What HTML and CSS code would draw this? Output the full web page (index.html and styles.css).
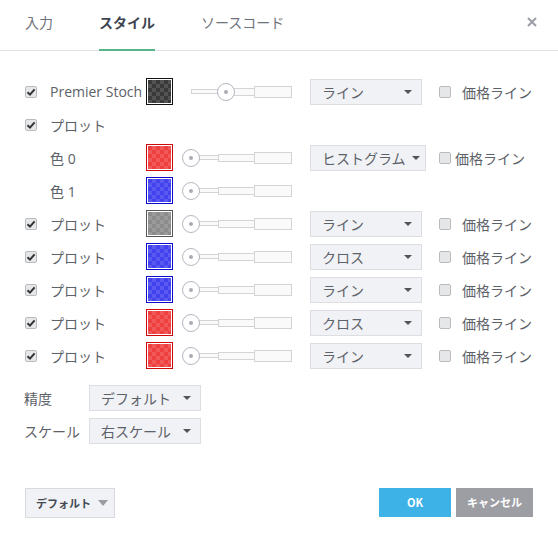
FILE: index.html
```html
<!DOCTYPE html>
<html lang="ja">
<head>
<meta charset="utf-8">
<link rel="stylesheet" href="styles.css">
</head>
<body>
<div class="dialog">
  <div class="tabs">
    <div class="tab">入力</div>
    <div class="tab active">スタイル</div>
    <div class="tab">ソースコード</div>
    <div class="close"><svg width="10" height="10" viewBox="0 0 10 10"><path d="M1 1L9 9M9 1L1 9" stroke="#9a9da3" stroke-width="2"/></svg></div>
  </div>

  <div class="content">
    <div class="row">
      <span class="cb checked"><svg width="10" height="10" viewBox="0 0 10 10"><path d="M1.5 5.2L4 7.6L8.6 2.4" fill="none" stroke="#333" stroke-width="2"/></svg></span>
      <span class="label">Premier Stoch</span>
      <span class="swatch black"></span>
      <div class="slider"><span class="seg s1"></span><span class="seg s2"></span><span class="seg s3"></span><span class="thumb mid"></span></div>
      <div class="select"><span>ライン</span><i class="caret"></i></div>
      <span class="cb pcb"></span><span class="plabel">価格ライン</span>
    </div>

    <div class="row">
      <span class="cb checked"><svg width="10" height="10" viewBox="0 0 10 10"><path d="M1.5 5.2L4 7.6L8.6 2.4" fill="none" stroke="#333" stroke-width="2"/></svg></span>
      <span class="label">プロット</span>
    </div>

    <div class="row">
      <span class="cb empty"></span>
      <span class="label">色 0</span>
      <span class="swatch red"></span>
      <div class="slider"><span class="seg s1"></span><span class="seg s2"></span><span class="seg s3"></span><span class="thumb"></span></div>
      <div class="select wide"><span>ヒストグラム</span><i class="caret"></i></div>
      <span class="cb pcb tight"></span><span class="plabel tight">価格ライン</span>
    </div>

    <div class="row">
      <span class="cb empty"></span>
      <span class="label">色 1</span>
      <span class="swatch blue"></span>
      <div class="slider"><span class="seg s1"></span><span class="seg s2"></span><span class="seg s3"></span><span class="thumb"></span></div>
    </div>

    <div class="row">
      <span class="cb checked"><svg width="10" height="10" viewBox="0 0 10 10"><path d="M1.5 5.2L4 7.6L8.6 2.4" fill="none" stroke="#333" stroke-width="2"/></svg></span>
      <span class="label">プロット</span>
      <span class="swatch gray"></span>
      <div class="slider"><span class="seg s1"></span><span class="seg s2"></span><span class="seg s3"></span><span class="thumb"></span></div>
      <div class="select"><span>ライン</span><i class="caret"></i></div>
      <span class="cb pcb"></span><span class="plabel">価格ライン</span>
    </div>

    <div class="row">
      <span class="cb checked"><svg width="10" height="10" viewBox="0 0 10 10"><path d="M1.5 5.2L4 7.6L8.6 2.4" fill="none" stroke="#333" stroke-width="2"/></svg></span>
      <span class="label">プロット</span>
      <span class="swatch blue"></span>
      <div class="slider"><span class="seg s1"></span><span class="seg s2"></span><span class="seg s3"></span><span class="thumb"></span></div>
      <div class="select"><span>クロス</span><i class="caret"></i></div>
      <span class="cb pcb"></span><span class="plabel">価格ライン</span>
    </div>

    <div class="row">
      <span class="cb checked"><svg width="10" height="10" viewBox="0 0 10 10"><path d="M1.5 5.2L4 7.6L8.6 2.4" fill="none" stroke="#333" stroke-width="2"/></svg></span>
      <span class="label">プロット</span>
      <span class="swatch blue"></span>
      <div class="slider"><span class="seg s1"></span><span class="seg s2"></span><span class="seg s3"></span><span class="thumb"></span></div>
      <div class="select"><span>ライン</span><i class="caret"></i></div>
      <span class="cb pcb"></span><span class="plabel">価格ライン</span>
    </div>

    <div class="row">
      <span class="cb checked"><svg width="10" height="10" viewBox="0 0 10 10"><path d="M1.5 5.2L4 7.6L8.6 2.4" fill="none" stroke="#333" stroke-width="2"/></svg></span>
      <span class="label">プロット</span>
      <span class="swatch red"></span>
      <div class="slider"><span class="seg s1"></span><span class="seg s2"></span><span class="seg s3"></span><span class="thumb"></span></div>
      <div class="select"><span>クロス</span><i class="caret"></i></div>
      <span class="cb pcb"></span><span class="plabel">価格ライン</span>
    </div>

    <div class="row">
      <span class="cb checked"><svg width="10" height="10" viewBox="0 0 10 10"><path d="M1.5 5.2L4 7.6L8.6 2.4" fill="none" stroke="#333" stroke-width="2"/></svg></span>
      <span class="label">プロット</span>
      <span class="swatch red"></span>
      <div class="slider"><span class="seg s1"></span><span class="seg s2"></span><span class="seg s3"></span><span class="thumb"></span></div>
      <div class="select"><span>ライン</span><i class="caret"></i></div>
      <span class="cb pcb"></span><span class="plabel">価格ライン</span>
    </div>

    <div class="opts">
      <div class="orow">
        <span class="olabel">精度</span>
        <div class="select"><span>デフォルト</span><i class="caret"></i></div>
      </div>
      <div class="orow">
        <span class="olabel">スケール</span>
        <div class="select"><span>右スケール</span><i class="caret"></i></div>
      </div>
    </div>
  </div>

  <div class="footer">
    <div class="defbtn">デフォルト<i class="caret light"></i></div>
    <div class="btns">
      <div class="btn ok">OK</div>
      <div class="btn cancel">キャンセル</div>
    </div>
  </div>
</div>
</body>
</html>
```

FILE: styles.css
```css
html, body {
  margin: 0;
  padding: 0;
  background: #ffffff;
}
body {
  font-family: "Open Sans", "Noto Sans CJK JP", sans-serif;
  color: #5d6168;
  font-size: 14px;
}
.dialog {
  width: 558px;
  height: 542px;
  position: relative;
}
.tabs {
  height: 50px;
  border-bottom: 1px solid #e0e3e6;
  display: flex;
  align-items: stretch;
  padding-left: 25px;
  gap: 46px;
  position: relative;
}
.tab {
  font-family: "Noto Sans CJK JP", sans-serif;
  font-size: 14px;
  color: #6e727a;
  display: flex;
  align-items: center;
  padding-bottom: 5px;
  box-sizing: border-box;
  border-bottom: 2px solid transparent;
  margin-bottom: -1px;
}
.tab.active {
  color: #3f4550;
  font-weight: 700;
  border-bottom-color: #57b388;
}
.close {
  position: absolute;
  right: 21px;
  top: 17px;
  width: 10px;
  height: 10px;
  line-height: 0;
}
.content {
  padding-top: 24px;
}
.row {
  display: flex;
  align-items: center;
  height: 33px;
  padding-left: 25px;
}
.cb {
  width: 12px;
  height: 12px;
  box-sizing: border-box;
  border: 1px solid #b9bbbe;
  border-radius: 2px;
  background: #e6e7e8;
  display: inline-flex;
  align-items: center;
  justify-content: center;
  flex: none;
}
.cb svg { display: block; }
.cb.empty {
  border: none;
  background: none;
}
.label {
  margin-left: 13px;
  width: 96px;
  flex: none;
  white-space: nowrap;
  color: #5d6168;
}
.swatch {
  width: 27px;
  height: 27px;
  box-sizing: border-box;
  border: 1px solid #111;
  padding: 1px;
  background-clip: content-box;
  flex: none;
  box-shadow: inset 0 0 0 1px #fff;
  background-image: conic-gradient(rgba(255,255,255,0.13) 25%, transparent 0 50%, rgba(255,255,255,0.13) 0 75%, transparent 0);
  background-size: 8px 8px;
  background-origin: content-box;
}
.swatch.black { border-color: #111; background-color: #3a3a3a; }
.swatch.red { border-color: #cc0a0a; background-color: #ef4040; }
.swatch.blue { border-color: #0a0acc; background-color: #4242ef; }
.swatch.gray { border-color: #555; background-color: #8b8b8b; }
.slider {
  position: relative;
  margin-left: 9px;
  width: 110px;
  height: 18px;
  padding-left: 9px;
  box-sizing: border-box;
  display: flex;
  align-items: center;
  flex: none;
}
.seg {
  box-sizing: border-box;
  border: 1px solid #d3d4d6;
  background: #fafafa;
  display: block;
}
.seg + .seg { margin-left: -1px; }
.s1 { width: 28px; height: 5px; }
.s2 { width: 38px; height: 8px; }
.s3 { width: 38px; height: 12px; }
.thumb {
  position: absolute;
  left: 0;
  top: 0;
  width: 18px;
  height: 18px;
  box-sizing: border-box;
  border: 1px solid #b4b7bf;
  border-radius: 50%;
  background: #fff;
}
.thumb.mid { left: 35px; }
.thumb::after {
  content: "";
  position: absolute;
  left: 6px;
  top: 6px;
  width: 4px;
  height: 4px;
  border-radius: 50%;
  background: #a9acb3;
}
.select {
  margin-left: 18px;
  width: 112px;
  height: 26px;
  box-sizing: border-box;
  background: #f1f2f6;
  border: 1px solid #dcdee2;
  display: flex;
  align-items: center;
  justify-content: space-between;
  padding: 0 9px 0 11px;
  font-family: "Noto Sans CJK JP", sans-serif;
  font-size: 14px;
  color: #5d6168;
  flex: none;
}
.select.wide {
  width: 116px;
  padding: 0 5px 0 11px;
}
.caret {
  width: 0;
  height: 0;
  border-left: 4px solid transparent;
  border-right: 4px solid transparent;
  border-top: 4px solid #555;
  display: block;
}
.caret.light {
  border-left-width: 5px;
  border-right-width: 5px;
  border-top: 6px solid #999ca2;
}
.pcb {
  margin-left: 17px;
}
.pcb.tight {
  margin-left: 13px;
}
.plabel {
  margin-left: 11px;
  font-family: "Noto Sans CJK JP", sans-serif;
  white-space: nowrap;
}
.plabel.tight {
  margin-left: 4px;
}
.opts {
  margin-top: 9px;
}
.orow {
  display: flex;
  align-items: center;
  height: 33px;
  padding-left: 24px;
}
.olabel {
  width: 65px;
  font-family: "Noto Sans CJK JP", sans-serif;
}
.orow .select {
  margin-left: 0;
}
.footer {
  position: absolute;
  left: 25px;
  right: 25px;
  top: 488px;
  display: flex;
  justify-content: space-between;
  align-items: flex-start;
}
.defbtn {
  width: 90px;
  height: 30px;
  box-sizing: border-box;
  border: 1px solid #d8dade;
  background: #f1f2f6;
  display: flex;
  align-items: center;
  padding-left: 10px;
  gap: 7px;
  font-family: "Noto Sans CJK JP", sans-serif;
  font-size: 11px;
  font-weight: 700;
  color: #44484f;
}
.btns {
  display: flex;
  gap: 5px;
}
.btn {
  height: 29px;
  display: flex;
  align-items: center;
  justify-content: center;
  color: #fff;
  font-family: "Noto Sans CJK JP", sans-serif;
  font-size: 11px;
  font-weight: 700;
  padding-bottom: 1px;
  box-sizing: border-box;
}
.ok {
  width: 72px;
  background: #3db2e6;
}
.cancel {
  width: 77px;
  background: #9c9ea4;
}
```
